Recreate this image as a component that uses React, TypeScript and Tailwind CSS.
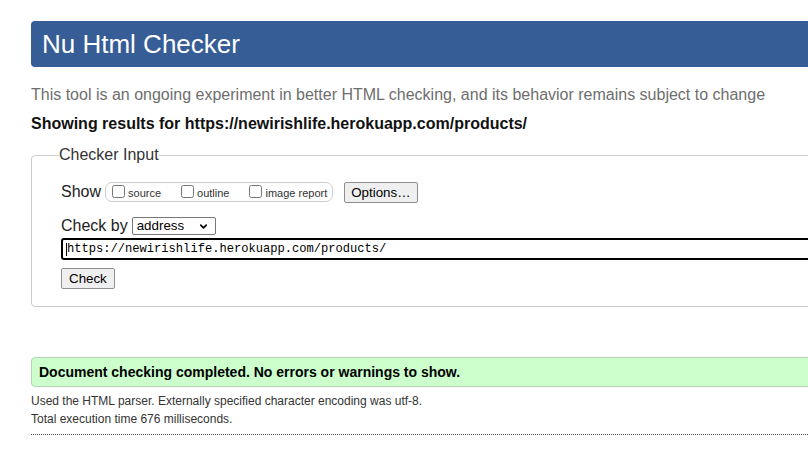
import { ChevronDown } from "lucide-react"

const options = ["source", "outline", "image report"]

export default function App() {
  return (
    <div className="w-[808px] h-[468px] overflow-hidden bg-white font-['Liberation_Sans',Arial,sans-serif] text-[#222]">
      <div className="w-[1000px] pl-[31px] pt-[21px]">
        {/* Title bar */}
        <h1 className="h-[46px] flex items-center pl-[11px] bg-[#365d95] rounded-[4px] text-white text-[26px] font-normal leading-none">
          Nu Html Checker
        </h1>

        <p className="mt-[18px] h-[20px] leading-[20px] text-[16px] text-[#6e6e6e]">
          This tool is an ongoing experiment in better HTML checking, and its behavior remains subject to change
        </p>
        <p className="mt-[9px] h-[20px] leading-[20px] text-[16px] font-bold text-[#111]">
          Showing results for https://newirishlife.herokuapp.com/products/
        </p>

        {/* Checker input form */}
        <fieldset className="mt-[11px] border border-[#cccccc] rounded-[4px] pl-[29px] pt-[16px] pb-[17px]">
          <legend className="ml-[-2px] leading-[20px] text-[16px] text-[#333]">Checker Input</legend>

          <div className="flex items-center h-[22px] text-[16px]">
            <span>Show</span>
            <div className="ml-[4px] flex items-center h-[20px] border border-[#cccccc] rounded-[7px] pl-[6px] pr-[5px]">
              {options.map((name, i) => (
                <label key={name} className={i === 0 ? "flex items-center text-[11px] text-[#333]" : "flex items-center text-[11px] text-[#333] ml-[20px]"}>
                  <input type="checkbox" className="w-[13px] h-[13px] mr-[3px] mt-[-2px]" />
                  <span className="mt-[2px]">{name}</span>
                </label>
              ))}
            </div>
            <button className="ml-[11px] h-[21px] px-[6px] bg-[#efefef] border border-[#8f8f8f] rounded-[2px] text-[13.33px] text-black">
              Options…
            </button>
          </div>

          <div className="mt-[13px] flex items-center h-[20px] text-[16px]">
            <span>Check by</span>
            <div className="relative ml-[4px] w-[84px] h-[18px] mt-[-1px]">
              <select className="block appearance-none w-full h-full border border-[#767676] rounded-[2px] pl-[4px] text-[13.33px] text-black leading-[16px]">
                <option>address</option>
              </select>
              <ChevronDown className="absolute right-[7px] top-[4px] w-[11px] h-[11px] text-black pointer-events-none" strokeWidth={3.5} />
            </div>
          </div>

          <div className="relative mt-[2px] h-[22px] border-2 border-black rounded-[3px] flex items-center pl-[4px] pt-[1px] font-['Liberation_Mono',monospace] text-[12.1px] text-black">
            <span className="absolute left-[3px] top-[3px] w-[1px] h-[13px] bg-black" />
            https://newirishlife.herokuapp.com/products/
          </div>

          <button className="block mt-[8px] h-[21px] px-[7px] bg-[#efefef] border border-[#8f8f8f] rounded-[2px] text-[13.33px] text-black">
            Check
          </button>
        </fieldset>

        {/* Result */}
        <div className="mt-[50px] h-[30px] flex items-center pl-[7px] bg-[#ccffcc] border border-[#b4d6b4] rounded-[4px] text-[14px] font-bold text-black">
          Document checking completed. No errors or warnings to show.
        </div>
        <p className="mt-[5px] text-[12px] leading-[18px] text-[#333]">
          Used the HTML parser. Externally specified character encoding was utf-8.
        </p>
        <p className="text-[12px] leading-[18px] text-[#333]">Total execution time 676 milliseconds.</p>
        <div className="mt-[6px] border-t border-dotted border-[#555]" />
      </div>
    </div>
  )
}
